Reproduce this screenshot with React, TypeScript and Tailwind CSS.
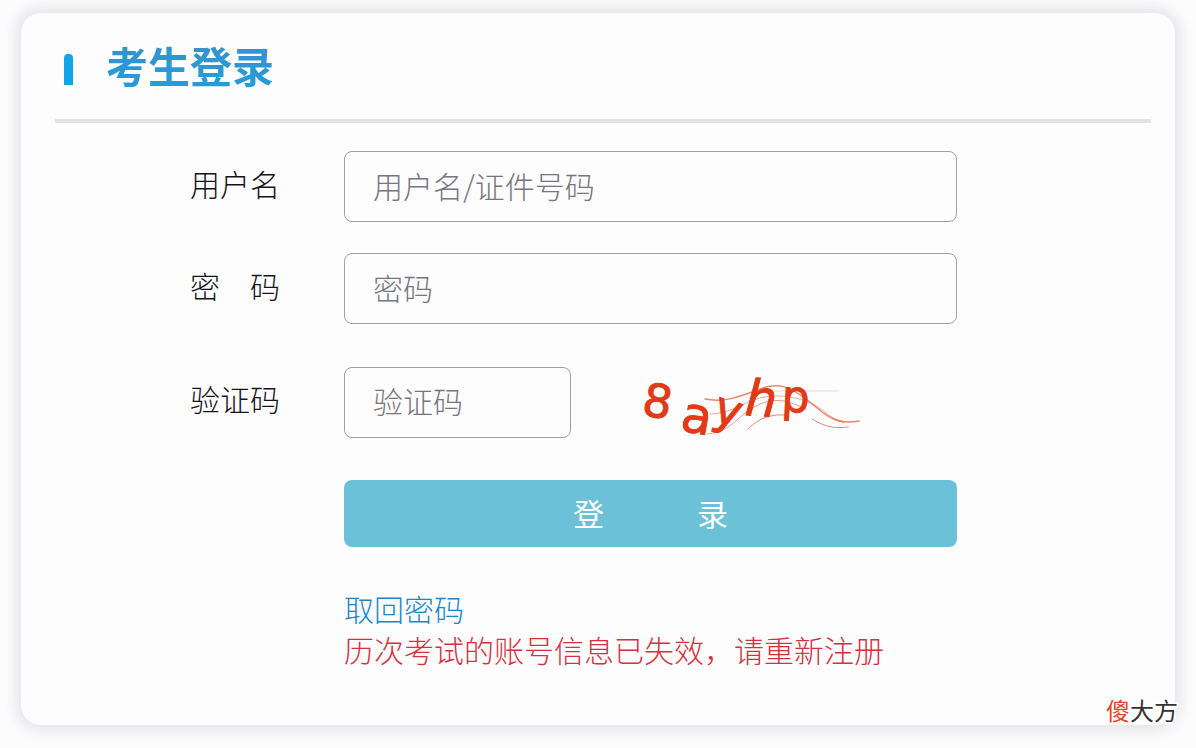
import React, { useState } from 'react';

interface FieldProps {
  id: string;
  label: string;
  placeholder: string;
  type?: string;
  value: string;
  onChange: (value: string) => void;
  className?: string;
  children?: React.ReactNode;
}

const Field: React.FC<FieldProps> = ({
  id,
  label,
  placeholder,
  type = 'text',
  value,
  onChange,
  className = 'w-full',
  children,
}) => (
  <div className="grid grid-cols-[225px_minmax(0,613px)] items-center gap-x-16">
    <label htmlFor={id} className="pb-2 text-right text-[30px] leading-10 font-light whitespace-nowrap text-[#15131c]">
      {label}
    </label>
    <div className="flex items-center">
      <input
        id={id}
        type={type}
        value={value}
        placeholder={placeholder}
        onChange={(e) => onChange(e.target.value)}
        className={`h-[71px] rounded-lg border border-[#a09fa6] bg-transparent px-7 pb-1 text-[30px] font-light text-[#15131c] outline-none placeholder:text-[#77757e] ${className}`}
      />
      {children}
    </div>
  </div>
);

const Captcha = () => (
  <svg
    viewBox="0 0 220 80"
    className="ml-[69px] h-[80px] w-[220px] shrink-0 overflow-visible"
    role="img"
    aria-label="验证码"
  >
    <g fill="none" stroke="#e4572e" strokeLinecap="round">
      <path d="M65 37C85 41 101 34 120 27S150 25 166 37S192 64 219 59" strokeWidth="1.5" opacity="0.7" />
      <path d="M70 52C90 52 103 40 120 36S152 34 168 40S188 56 204 61" strokeWidth="1" opacity="0.5" />
      <path d="M68 72C92 70 98 52 118 43S150 40 166 47" strokeWidth="1" opacity="0.6" />
      <path d="M108 67C120 55 132 52 146 53" strokeWidth="1" opacity="0.7" />
      <path d="M172 57C184 64 192 67 208 65" strokeWidth="1" opacity="0.7" />
      <path d="M132 29H198" strokeWidth="1" opacity="0.25" />
    </g>
    <g
      fill="#e03a16"
      stroke="#e03a16"
      strokeWidth="1"
      textAnchor="middle"
      className="font-['DejaVu_Sans',sans-serif]"
    >
      <text transform="translate(15 55) rotate(10)" fontSize="46">8</text>
      <text transform="translate(54 71) rotate(10)" fontSize="50">a</text>
      <text transform="translate(84 63) rotate(17)" fontSize="46">y</text>
      <text transform="translate(120 54) rotate(4)" fontSize="50" fontStyle="italic">h</text>
      <text transform="translate(155 50) rotate(3)" fontSize="44">p</text>
    </g>
  </svg>
);

export default function App() {
  const [username, setUsername] = useState('');
  const [password, setPassword] = useState('');
  const [code, setCode] = useState('');

  return (
    <div className="relative min-h-screen bg-[#fcfcfd] px-[21px] pt-[13px] pb-[23px] font-['Noto_Sans_CJK_SC',sans-serif]">
      <main className="rounded-[20px] bg-[#fdfdfe] pr-6 pb-[55px] pl-[34px] shadow-[0_0_14px_5px_#e4e4e8]">
        <header className="flex h-[110px] items-center gap-[33px] border-b-4 border-[#e3e3e6] pb-0.5 pl-[9px]">
          <span className="mt-2 h-[31px] w-[9px] rounded-t-sm bg-[#12a3e8]" />
          <h1 className="bg-linear-to-b from-[#3a8fc9] to-[#1b9fdc] bg-clip-text text-[42px] leading-[60px] font-bold text-transparent">
            考生登录
          </h1>
        </header>

        <form onSubmit={(e) => e.preventDefault()} className="pt-7">
          <Field
            id="username"
            label="用户名"
            placeholder="用户名/证件号码"
            value={username}
            onChange={setUsername}
          />
          <div className="h-[31px]" />
          <Field
            id="password"
            label="密　码"
            placeholder="密码"
            type="password"
            value={password}
            onChange={setPassword}
          />
          <div className="h-[38px]" />
          <Field
            id="code"
            label="验证码"
            placeholder="验证码"
            value={code}
            onChange={setCode}
            className="w-[227px]"
          >
            <Captcha />
          </Field>

          <div className="mt-[38px] grid grid-cols-[225px_minmax(0,613px)] gap-x-16">
            <div className="col-start-2">
              <button
                type="submit"
                className="h-[67px] w-full rounded-lg bg-[#6bc1d7] text-[31px] text-white"
              >
                登　　　录
              </button>
              <div className="mt-[41px] text-[30px] leading-[41px] font-light whitespace-nowrap">
                <a href="#reset" className="text-[#1a86cb]">
                  取回密码
                </a>
                <p className="text-[#d6303f]">历次考试的账号信息已失效，请重新注册</p>
              </div>
            </div>
          </div>
        </form>
      </main>

      <p className="absolute right-[18px] bottom-5 text-2xl leading-9 text-[#333] [paint-order:stroke_fill] [-webkit-text-stroke:4px_white]">
        <span className="text-[#e8432c]">傻</span>大方
      </p>
    </div>
  );
}
